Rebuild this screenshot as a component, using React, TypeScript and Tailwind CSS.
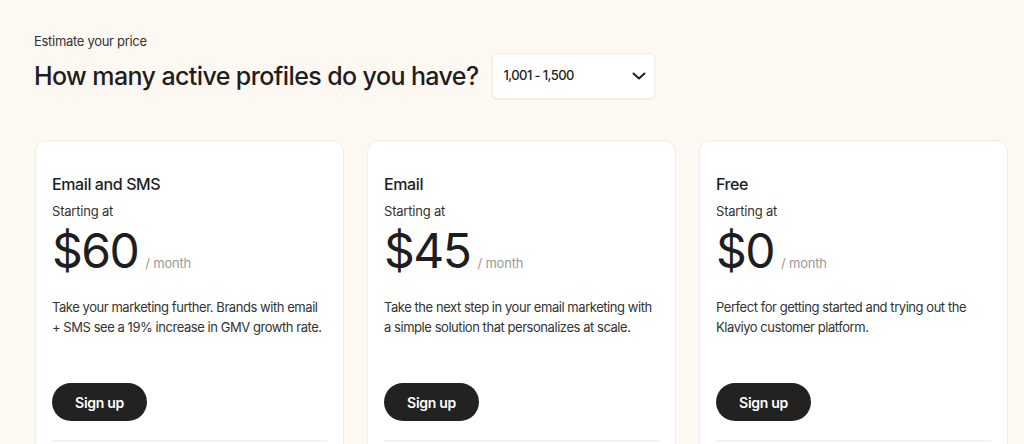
import React from "react";

const plans = [
  {
    name: "Email and SMS",
    price: "$60",
    desc: ["Take your marketing further. Brands with email", "+ SMS see a 19% increase in GMV growth rate."],
  },
  {
    name: "Email",
    price: "$45",
    desc: ["Take the next step in your email marketing with", "a simple solution that personalizes at scale."],
  },
  {
    name: "Free",
    price: "$0",
    desc: ["Perfect for getting started and trying out the", "Klaviyo customer platform."],
  },
];

export default function App() {
  return (
    <div
      className="w-[1024px] h-[444px] overflow-hidden bg-[#fdf8f2] text-[#1e1e1e]"
      style={{ fontFamily: "Inter, 'Liberation Sans', sans-serif" }}
    >
      <div className="pl-[34px] pt-[33px]">
        <div className="text-[13px] leading-[16px] tracking-[-0.3px] text-[#333]">Estimate your price</div>
        <div className="mt-[4px] flex items-center gap-[13px]">
          <h1 className="text-[25px] leading-[32px] font-medium tracking-[-0.6px] text-[#1e1e1e] whitespace-nowrap">
            How many active profiles do you have?
          </h1>
          <div className="w-[163px] h-[46px] bg-white rounded-[5px] border border-[#f0ece6] shadow-[0_1px_2px_rgba(0,0,0,0.06)] flex items-center justify-between pl-[11px] pr-[8px]">
            <span className="text-[13px] font-medium tracking-[-0.6px] text-[#1e1e1e]">1,001 - 1,500</span>
            <svg width="14" height="14" viewBox="0 0 14 14" fill="none">
              <path d="M1.5 4.5 L7 9.5 L12.5 4.5" stroke="#1e1e1e" strokeWidth="2" strokeLinecap="round" strokeLinejoin="round" />
            </svg>
          </div>
        </div>
      </div>
      <div className="mt-[41px] ml-[35px] flex gap-[23px]">
        {plans.map((p) => (
          <div
            key={p.name}
            className="w-[309px] h-[340px] bg-white rounded-[12px] border border-[#f1ece6] px-[16px] pt-[33px]"
          >
            <div className="text-[16px] leading-[20px] font-medium tracking-[-0.4px] text-[#1e1e1e]">{p.name}</div>
            <div className="mt-[8px] text-[13px] leading-[18px] tracking-[-0.2px] text-[#333]">Starting at</div>
            <div className="mt-[5px] flex items-baseline">
              <span className="text-[48px] leading-[52px] font-normal tracking-[-1.5px] text-[#1e1e1e]">{p.price}</span>
              <span className="ml-[7px] text-[13px] tracking-[-0.2px] text-[#9a9a9a]">/ month</span>
            </div>
            <div className="mt-[20px] text-[13px] leading-[20px] tracking-[-0.45px] text-[#333] whitespace-nowrap">
              {p.desc.map((l) => (
                <div key={l}>{l}</div>
              ))}
            </div>
            <button className="mt-[46px] w-[95px] h-[38px] rounded-full bg-[#222222] text-white text-[14px] font-semibold tracking-[-0.3px]">
              Sign up
            </button>
            <div className="mt-[19px] h-[2px] bg-[#f2f2f2] w-full"></div>
          </div>
        ))}
      </div>
    </div>
  );
}
